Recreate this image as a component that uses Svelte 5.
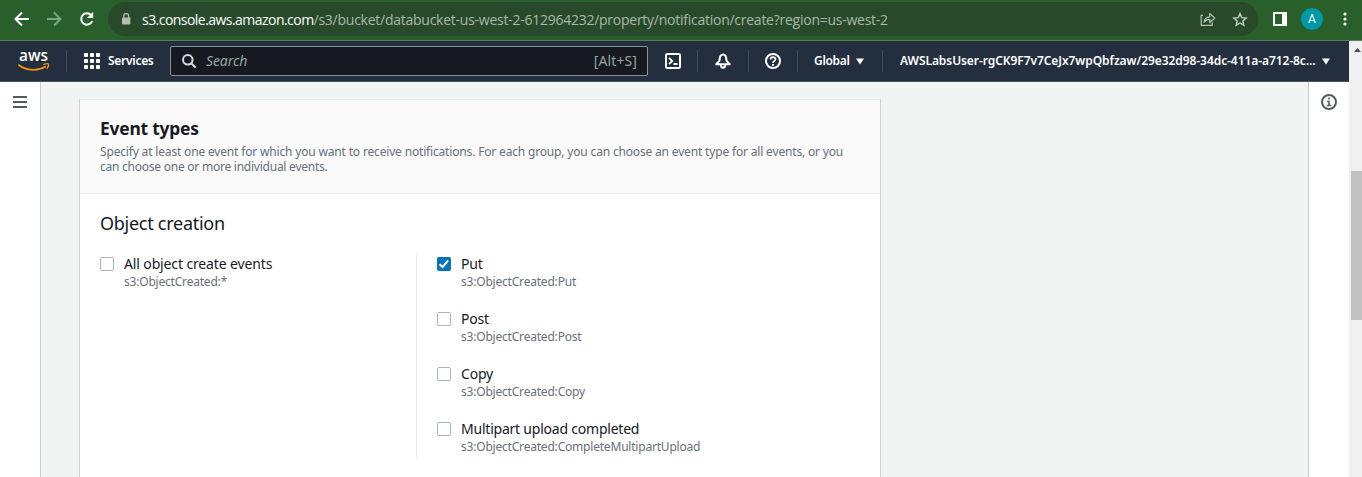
<script>
  const events = [
    { name: 'Put', code: 's3:ObjectCreated:Put', checked: true },
    { name: 'Post', code: 's3:ObjectCreated:Post', checked: false },
    { name: 'Copy', code: 's3:ObjectCreated:Copy', checked: false },
    { name: 'Multipart upload completed', code: 's3:ObjectCreated:CompleteMultipartUpload', checked: false }
  ];
</script>

{#snippet option(event)}
  <label class="option">
    <span class="box" class:checked={event.checked}>
      {#if event.checked}
        <svg width="14" height="14" viewBox="0 0 14 14"><path d="M2.5 7.2 5.6 10 11.2 3.4" fill="none" stroke="#fff" stroke-width="2" /></svg>
      {/if}
    </span>
    <span class="words">
      <span class="name">{event.name}</span>
      <span class="code">{event.code}</span>
    </span>
  </label>
{/snippet}

<div class="window">
  <header class="browser">
    <svg class="back" width="16" height="16" viewBox="0 0 16 16" fill="none" stroke="#fff" stroke-width="2"><path d="M15 8H2M8 1.5 1.5 8 8 14.5" /></svg>
    <svg class="forward" width="16" height="16" viewBox="0 0 16 16" fill="none" stroke="#7fa480" stroke-width="2"><path d="M1 8h13M8 1.5 14.5 8 8 14.5" /></svg>
    <svg class="reload" width="16" height="16" viewBox="0 0 16 16"><path d="M12.2 4.2A5.7 5.7 0 1 0 13.2 10" fill="none" stroke="#fff" stroke-width="2" /><path d="M14.2 .8V7H8z" fill="#fff" /></svg>
    <div class="address">
      <svg class="lock" width="10" height="13" viewBox="0 0 10 13"><rect x="1" y="4.5" width="8.4" height="7" rx="1" fill="#b4bdb4" /><path d="M2.7 5V3.2a2.5 2.5 0 0 1 5 0V5" fill="none" stroke="#b4bdb4" stroke-width="1.3" /></svg>
      <span class="url"><span class="host">s3.console.aws.amazon.com</span><span class="path">/s3/bucket/databucket-us-west-2-612964232/property/notification/create?region=us-west-2</span></span>
      <svg class="share" width="16" height="15" viewBox="0 0 16 15" fill="none" stroke="#b3c0b3" stroke-width="1.2"><path d="M3 3.3H1.2v10h11v-3" /><path d="M4 10.2C4.3 6.8 6.3 5 9.7 4.8V1.5L14.7 6l-5 4.5V7.3C7 7.3 5.3 8.3 4 10.2z" stroke-linejoin="round" /></svg>
      <svg class="star" width="16" height="15" viewBox="0 0 16 15"><path d="M8 1.5 9.7 5.6 14.2 6 10.8 8.9 11.8 13.3 8 11 4.2 13.3 5.2 8.9 1.8 6 6.3 5.6z" fill="none" stroke="#c2cec2" stroke-width="1.4" /></svg>
    </div>
    <svg class="panel" width="14" height="14" viewBox="0 0 14 14"><path fill="#fff" fill-rule="evenodd" d="M0 0h14v14H0zM2 2v10h7V2z" /></svg>
    <span class="avatar">A</span>
    <svg class="dots" width="4" height="14" viewBox="0 0 4 14" fill="#fff"><circle cx="2" cy="2" r="1.6" /><circle cx="2" cy="7" r="1.6" /><circle cx="2" cy="12" r="1.6" /></svg>
  </header>

  <div class="page">
    <div class="console">
      <nav class="bar">
        <div class="cell logo">
          <svg width="34" height="34" viewBox="0 -6 34 34">
            <text x="2" y="11.3" font-family="Open Sans, sans-serif" font-size="16" font-weight="600" fill="#fff" textLength="29" lengthAdjust="spacingAndGlyphs">aws</text>
            <path d="M1.3 14.7C10 21.2 21 21.2 28.8 16.5" fill="none" stroke="#f79400" stroke-width="1.8" />
            <path d="M26.3 14.7C28.5 13.8 31 13.7 31.5 14.2 32 15 31 17.5 29.8 18.7" fill="none" stroke="#f79400" stroke-width="1.3" />
          </svg>
        </div>
        <div class="cell services">
          <svg width="16" height="16" viewBox="0 0 16 16" fill="#fff">
            {#each [0, 6, 12] as y}{#each [0, 6, 12] as x}<rect {x} {y} width="4" height="4" rx="0.7" />{/each}{/each}
          </svg>
          <span class="label services-label">Services</span>
        </div>
        <div class="search">
          <svg width="15" height="15" viewBox="0 0 15 15" fill="none" stroke="#d5dbdb" stroke-width="2"><circle cx="5.8" cy="5.8" r="4.8" /><path d="m9.2 9.2 4.4 4.4" /></svg>
          <span class="placeholder">Search</span>
          <span class="shortcut">[Alt+S]</span>
        </div>
        <div class="cell icon shell">
          <svg width="16" height="16" viewBox="0 0 16 16" fill="none" stroke="#fff" stroke-width="2"><rect x="1" y="1" width="14" height="14" rx="1.2" /><path d="M4 4.8 7.2 8 4 11.2M8.5 11h4" stroke-width="1.8" /></svg>
        </div>
        <div class="cell icon bell">
          <svg width="16" height="16" viewBox="0 0 16 16" fill="none" stroke="#fff" stroke-width="2" stroke-linejoin="round"><path d="M1.2 11.2h13.6L11.4 7.6C11.4 4 10.4 1.4 8 1.4S4.6 4 4.6 7.6z" /><path d="M5.8 11.8c0 4 4.4 4 4.4 0" /></svg>
        </div>
        <div class="cell icon help">
          <svg width="16" height="16" viewBox="0 0 16 16" fill="none" stroke="#fff" stroke-width="2"><circle cx="8" cy="8" r="7" /><path d="M5.5 6.6C5.5 3.3 10.6 3.5 10.5 6.3 10.4 8 8 7.8 8 10" stroke-width="1.8" /><path d="M8 10.9v1.8" /></svg>
        </div>
        <div class="cell region">
          <span class="label global-label">Global</span>
          <svg width="8" height="7" viewBox="0 0 8 7"><path d="M0 .5h8L4 6.5z" fill="#fff" /></svg>
        </div>
        <div class="account">
          <span class="label account-label">AWSLabsUser-rgCK9F7v7CeJx7wpQbfzaw/29e32d98-34dc-411a-a712-8c...</span>
          <svg width="8" height="7" viewBox="0 0 8 7"><path d="M0 .5h8L4 6.5z" fill="#fff" /></svg>
        </div>
      </nav>

      <div class="body">
        <aside class="rail left">
          <svg width="14" height="12" viewBox="0 0 14 12" fill="#545b64"><path d="M0 0h14v2H0zM0 5h14v2H0zM0 10h14v2H0z" /></svg>
        </aside>
        <main>
          <section class="card">
            <div class="head">
              <h2>Event types</h2>
              <p><span class="line1">Specify at least one event for which you want to receive notifications. For each group, you can choose an event type for all events, or you</span><br /><span class="line2">can choose one or more individual events.</span></p>
            </div>
            <div class="content">
              <h3>Object creation</h3>
              <div class="columns">
                <div class="all">{@render option({ name: 'All object create events', code: 's3:ObjectCreated:*', checked: false })}</div>
                <div class="each">
                  {#each events as event}{@render option(event)}{/each}
                </div>
              </div>
            </div>
          </section>
        </main>
        <aside class="rail right">
          <svg width="16" height="16" viewBox="0 0 16 16" fill="none" stroke="#545b64" stroke-width="2"><circle cx="8" cy="8" r="7" /><path d="M8 3.5v2M6 7.5h2V12M5.8 11.5h4.4" stroke-width="1.6" /></svg>
        </aside>
      </div>
    </div>
    <div class="scrollbar">
      <svg width="7" height="4" viewBox="0 0 7 4"><path d="M0 4 3.5 0 7 4z" fill="#505050" /></svg>
      <div class="thumb"></div>
    </div>
  </div>
</div>

<style>
  :global(body) { margin: 0; overflow: hidden; }
  .window { width: 1362px; height: 477px; overflow: hidden; display: flex; flex-direction: column; font-family: "Noto Sans", sans-serif; color: #16191f; white-space: nowrap; }
  svg { display: block; flex: none; }
  .browser { height: 40px; flex: none; display: flex; align-items: center; background: #285f2b; border-bottom: 1px solid #568058; padding-left: 14px; }
  .browser > svg { margin-top: -2px; }
  .forward { margin-left: 16px; }
  .reload { margin-left: 17px; }
  .address { margin-left: 13px; margin-top: -2px; width: 1150px; height: 34px; border-radius: 17px; background: #284a2a; display: flex; align-items: center; flex: none; }
  .lock { margin-left: 13px; }
  .url { margin-left: 11px; width: 1048px; font-family: "Open Sans", sans-serif; font-size: 14px; }
  .host { color: #fff; letter-spacing: -0.54px; }
  .path { color: #a9b8a9; letter-spacing: -0.255px; }
  .share { margin-left: 10px; }
  .star { margin-left: 16px; }
  .panel { margin-left: 15px; }
  .avatar { margin-left: 14px; margin-top: -2px; width: 22px; height: 22px; border-radius: 50%; background: #0097a7; color: #fff; font: 12px/22px Roboto, sans-serif; text-align: center; }
  .dots { margin-left: 19.5px; }
  .page { flex: 1; min-height: 0; display: flex; }
  .console { width: 1349px; display: flex; flex-direction: column; }
  .bar { height: 40px; flex: none; background: #232f3e; border-bottom: 1px solid #4b535f; display: flex; align-items: center; }
  .cell { height: 22px; display: flex; align-items: center; border-right: 1px solid #414d5c; box-sizing: border-box; flex: none; }
  .logo { width: 67px; padding-left: 17px; }
  .services { width: 103px; padding-left: 17px; border: 0; }
  .label { font-size: 12px; font-weight: 600; color: #fff; line-height: 18px; }
  .services-label { margin-left: 8px; letter-spacing: -0.28px; }
  .search { width: 478px; height: 30px; box-sizing: border-box; border: 1px solid #879596; border-radius: 2px; background: #16191f; display: flex; align-items: center; padding: 0 10px 0 11px; flex: none; color: #95a5a6; font-size: 14px; }
  .search span { margin-top: -2px; }
  .placeholder { margin-left: 9px; font-style: italic; flex: 1; letter-spacing: -0.1px; }
  .shortcut { letter-spacing: 0.1px; }
  .shell { width: 50px; padding-left: 17px; }
  .bell { width: 51px; padding-left: 17px; }
  .help { width: 49px; padding-left: 16px; }
  .region { width: 85px; padding-left: 16px; }
  .global-label { width: 36px; letter-spacing: -0.3px; }
  .region svg { margin-left: 6px; }
  .account { display: flex; align-items: center; padding-left: 17px; }
  .account-label { width: 416px; letter-spacing: -0.07px; }
  .account svg { margin-left: 6px; }
  .body { flex: 1; display: flex; min-height: 0; background: #f2f3f3; }
  .rail { width: 40px; flex: none; background: #fff; }
  .left { border-right: 1px solid #c8cccc; }
  .left svg { margin: 14px 0 0 13px; }
  .right { border-left: 1px solid #c3cbcb; }
  .right svg { margin: 12px 0 0 12px; }
  main { flex: 1; padding: 17px 0 0 38px; }
  .card { width: 800px; height: 420px; background: #fff; border: 1px solid #cfd3d3; border-top-color: #eaeded; }
  .head { height: 93px; background: #fafafa; border-bottom: 1px solid #eaeded; padding: 0 20px; overflow: hidden; }
  h2 { margin: 17px 0 0; font-size: 17.4px; line-height: 22px; font-weight: 700; letter-spacing: -0.2px; }
  p { margin: 5px 0 0; font-size: 12px; line-height: 15px; color: #687078; }
  .line1 { letter-spacing: -0.168px; }
  .line2 { letter-spacing: -0.24px; }
  .content { padding: 18px 20px 0; }
  h3 { margin: 0; font-size: 18px; line-height: 22px; font-weight: 400; letter-spacing: -0.27px; }
  .columns { margin-top: 20px; display: flex; height: 205px; }
  .all { width: 316px; border-right: 1px solid #eaeded; }
  .each { padding-left: 20px; }
  .option { display: flex; height: 55px; }
  .box { width: 14px; height: 14px; margin-top: 3px; box-sizing: border-box; border: 1px solid #aab7b8; border-radius: 2px; background: #fff; flex: none; }
  .checked { border: 0; background: #0073bb; }
  .words { margin-left: 10px; display: flex; flex-direction: column; align-items: flex-start; }
  .name { font-size: 14px; line-height: 20px; letter-spacing: -0.13px; }
  .each .name { letter-spacing: -0.22px; }
  .code { font-size: 12px; line-height: 16px; color: #687078; letter-spacing: -0.2px; }
  .scrollbar { width: 13px; background: #f0f0f0; display: flex; flex-direction: column; overflow: hidden; }
  .scrollbar svg { margin: 7px 0 0 5px; }
  .thumb { margin: 119px 0 0 2px; height: 149px; background: #c1c1c1; }
</style>
